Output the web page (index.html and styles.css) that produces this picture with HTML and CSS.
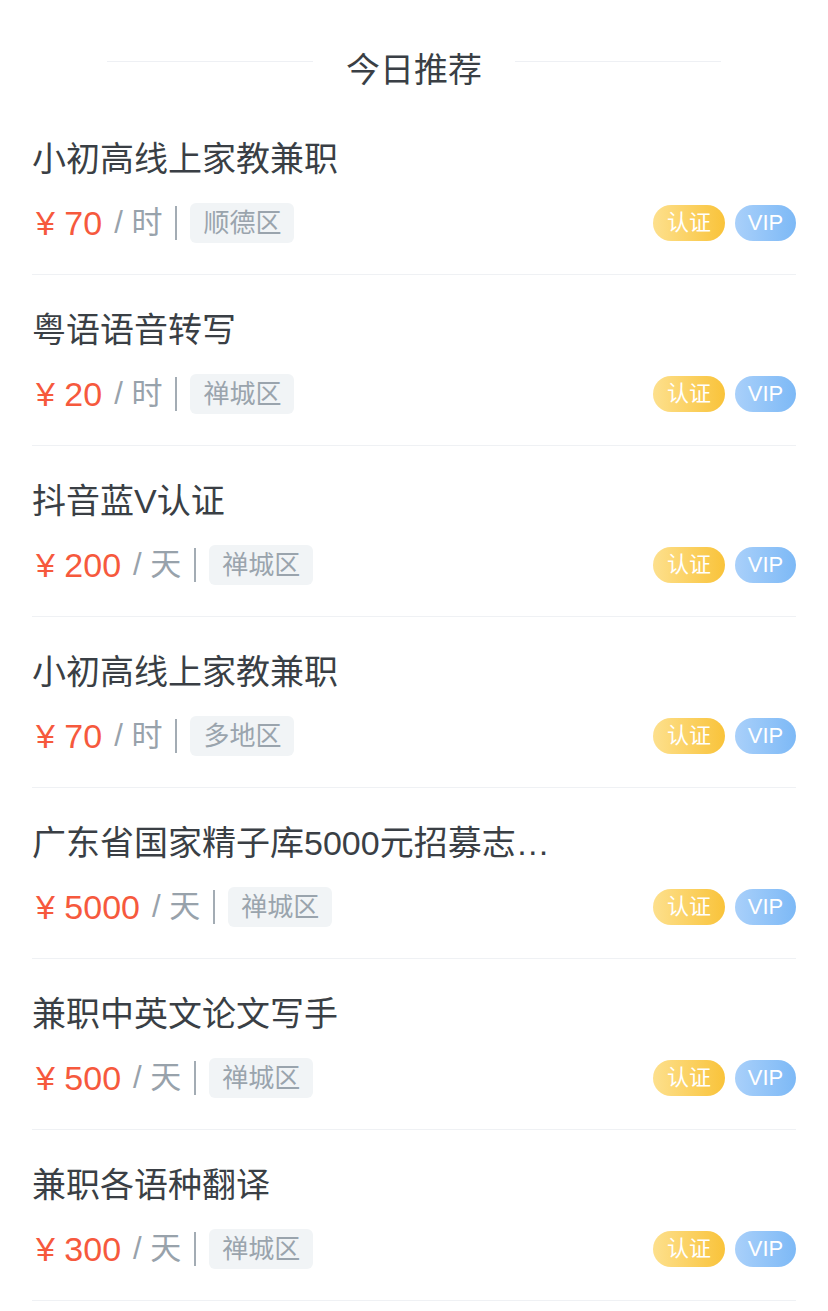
FILE: index.html
```html
<!DOCTYPE html>
<html lang="zh">
<head>
<meta charset="utf-8">
<link rel="stylesheet" href="styles.css">
</head>
<body>
<div class="page">
  <div class="header">
    <span class="hline"></span>
    <span class="htitle">今日推荐</span>
    <span class="hline"></span>
  </div>
  <ul class="list">
    <li class="item">
      <div class="title">小初高线上家教兼职</div>
      <div class="row">
        <div class="info"><span class="price">¥ 70</span><span class="unit">/&nbsp;时</span><span class="sep"></span><span class="tag">顺德区</span></div>
        <div class="badges"><span class="badge auth">认证</span><span class="badge vip">VIP</span></div>
      </div>
    </li>
    <li class="item">
      <div class="title">粤语语音转写</div>
      <div class="row">
        <div class="info"><span class="price">¥ 20</span><span class="unit">/&nbsp;时</span><span class="sep"></span><span class="tag">禅城区</span></div>
        <div class="badges"><span class="badge auth">认证</span><span class="badge vip">VIP</span></div>
      </div>
    </li>
    <li class="item">
      <div class="title">抖音蓝V认证</div>
      <div class="row">
        <div class="info"><span class="price">¥ 200</span><span class="unit">/&nbsp;天</span><span class="sep"></span><span class="tag">禅城区</span></div>
        <div class="badges"><span class="badge auth">认证</span><span class="badge vip">VIP</span></div>
      </div>
    </li>
    <li class="item">
      <div class="title">小初高线上家教兼职</div>
      <div class="row">
        <div class="info"><span class="price">¥ 70</span><span class="unit">/&nbsp;时</span><span class="sep"></span><span class="tag">多地区</span></div>
        <div class="badges"><span class="badge auth">认证</span><span class="badge vip">VIP</span></div>
      </div>
    </li>
    <li class="item">
      <div class="title">广东省国家精子库5000元招募志愿者</div>
      <div class="row">
        <div class="info"><span class="price">¥ 5000</span><span class="unit">/&nbsp;天</span><span class="sep"></span><span class="tag">禅城区</span></div>
        <div class="badges"><span class="badge auth">认证</span><span class="badge vip">VIP</span></div>
      </div>
    </li>
    <li class="item">
      <div class="title">兼职中英文论文写手</div>
      <div class="row">
        <div class="info"><span class="price">¥ 500</span><span class="unit">/&nbsp;天</span><span class="sep"></span><span class="tag">禅城区</span></div>
        <div class="badges"><span class="badge auth">认证</span><span class="badge vip">VIP</span></div>
      </div>
    </li>
    <li class="item">
      <div class="title">兼职各语种翻译</div>
      <div class="row">
        <div class="info"><span class="price">¥ 300</span><span class="unit">/&nbsp;天</span><span class="sep"></span><span class="tag">禅城区</span></div>
        <div class="badges"><span class="badge auth">认证</span><span class="badge vip">VIP</span></div>
      </div>
    </li>
  </ul>
</div>
</body>
</html>
```
FILE: styles.css
```css
* { box-sizing: border-box; }
html, body { margin: 0; padding: 0; background: #ffffff; }
body {
  font-family: "Liberation Sans", "Noto Sans CJK SC", sans-serif;
  color: #3a3f45;
}
.page { width: 828px; }
.header {
  height: 104px;
  padding-top: 48px;
  display: flex;
  justify-content: center;
  align-items: flex-start;
  gap: 33px;
}
.hline {
  width: 206px;
  height: 1px;
  margin-top: 13px;
  background: #eef0f4;
}
.htitle {
  font-size: 34px;
  line-height: 44px;
  color: #3a3f45;
}
.list { list-style: none; margin: 0; padding: 0 32px; }
.item {
  height: 171px;
  padding-top: 33px;
  border-bottom: 1px solid #eff1f4;
}
.title {
  font-size: 34px;
  line-height: 44px;
  height: 44px;
  max-width: 522px;
  white-space: nowrap;
  overflow: hidden;
  text-overflow: ellipsis;
  color: #3a3f45;
}
.row {
  margin-top: 22px;
  height: 40px;
  display: flex;
  align-items: center;
  justify-content: space-between;
}
.info { display: flex; align-items: center; }
.price {
  font-size: 34px;
  line-height: 40px;
  color: #f6593d;
  margin-left: 4px;
}
.unit {
  font-size: 31px;
  line-height: 40px;
  color: #98a2ab;
  margin-left: 12px;
}
.sep {
  width: 2px;
  height: 34px;
  background: #a3acb4;
  margin-left: 13px;
  margin-right: 13px;
}
.tag {
  height: 40px;
  line-height: 40px;
  padding: 0 13px;
  border-radius: 6px;
  background: #f1f4f6;
  color: #9aa4ad;
  font-size: 26px;
}
.badges { display: flex; gap: 10px; }
.badge {
  height: 36px;
  line-height: 36px;
  border-radius: 18px;
  color: #ffffff;
  font-size: 22px;
  text-align: center;
}
.auth {
  width: 72px;
  background: linear-gradient(90deg, #fde08d, #f9c33a);
}
.vip {
  width: 61px;
  background: linear-gradient(90deg, #a9d0fa, #7db9f6);
}
```
